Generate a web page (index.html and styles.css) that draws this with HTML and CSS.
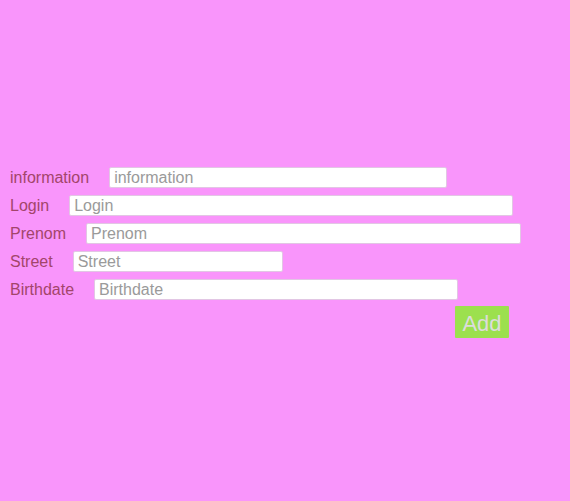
FILE: index.html
```html
<!DOCTYPE html>
<html>
<head>
<meta charset="utf-8">
<link rel="stylesheet" href="styles.css">
</head>
<body>
<form class="form">
  <div class="row"><label class="label">information</label><input class="field w-info" placeholder="information"></div>
  <div class="row"><label class="label">Login</label><input class="field w-login" placeholder="Login"></div>
  <div class="row"><label class="label">Prenom</label><input class="field w-prenom" placeholder="Prenom"></div>
  <div class="row"><label class="label">Street</label><input class="field w-street" placeholder="Street"></div>
  <div class="row"><label class="label">Birthdate</label><input class="field w-birth" placeholder="Birthdate"></div>
  <div class="actions"><button type="button" class="add">Add</button></div>
</form>
</body>
</html>
```
FILE: styles.css
```css
html, body {
  margin: 0;
  padding: 0;
  background: #f995fb;
  height: 100%;
}
body {
  font-family: "Liberation Sans", Arial, sans-serif;
}
.form {
  padding: 167px 0 0 10px;
  display: flex;
  flex-direction: column;
  gap: 7px;
}
.row {
  display: flex;
  align-items: center;
  height: 21px;
}
.label {
  font-size: 16px;
  color: #a3456a;
  margin-right: 20px;
  line-height: 21px;
}
.field {
  box-sizing: border-box;
  height: 21px;
  border: 1px solid #e2c6e4;
  border-radius: 2px;
  background: #fff;
  padding: 1px 4px 0;
  font-family: "Liberation Sans", Arial, sans-serif;
  font-size: 16px;
  color: #333;
  outline: none;
}
.field::placeholder {
  color: #9a9a9a;
}
.w-info { width: 338px; }
.w-login { width: 444px; }
.w-prenom { width: 435px; }
.w-street { width: 210px; }
.w-birth { width: 364px; }
.actions {
  display: flex;
  padding-left: 445px;
  margin-top: -1px;
}
.add {
  box-sizing: border-box;
  width: 54px;
  height: 32px;
  border: none;
  border-radius: 1px;
  background: #9ce04e;
  color: #dcdcdc;
  font-family: "Liberation Sans", Arial, sans-serif;
  font-size: 22px;
  padding: 4px 0 0;
}
```
